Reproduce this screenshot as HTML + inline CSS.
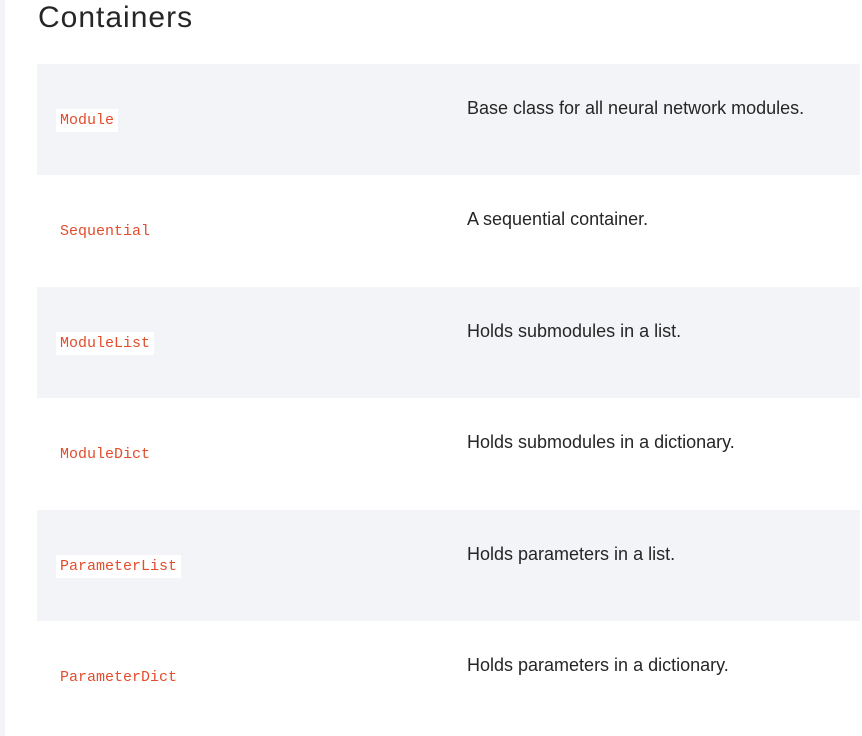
<!DOCTYPE html>
<html><head><style>
body{margin:0;width:862px;height:736px;background:#fff;position:relative;overflow:hidden;font-family:"Liberation Sans",sans-serif}
.strip{position:absolute;left:0;top:0;width:5px;height:736px;background:#f3f4f7}
h1{position:absolute;left:38px;top:1px;margin:0;font-weight:normal;font-size:30px;color:#262626;letter-spacing:1px}
.row{position:absolute;left:37px;width:823px;height:111px}
.g{background:#f3f4f7}
code{position:absolute;left:19px;top:45px;font-family:"Liberation Mono",monospace;font-size:15px;color:#e44c2c;background:#fff;padding:3px 4px;line-height:17px}
.d{position:absolute;left:430px;top:34px;font-size:18px;color:#262626}
</style></head><body>
<div class="strip"></div>
<h1>Containers</h1>
<div class="row g" style="top:64px"><code>Module</code><div class="d">Base class for all neural network modules.</div></div>
<div class="row" style="top:175px"><code>Sequential</code><div class="d">A sequential container.</div></div>
<div class="row g" style="top:287px"><code>ModuleList</code><div class="d">Holds submodules in a list.</div></div>
<div class="row" style="top:398px"><code>ModuleDict</code><div class="d">Holds submodules in a dictionary.</div></div>
<div class="row g" style="top:510px"><code>ParameterList</code><div class="d">Holds parameters in a list.</div></div>
<div class="row" style="top:621px"><code>ParameterDict</code><div class="d">Holds parameters in a dictionary.</div></div>
</body></html>
